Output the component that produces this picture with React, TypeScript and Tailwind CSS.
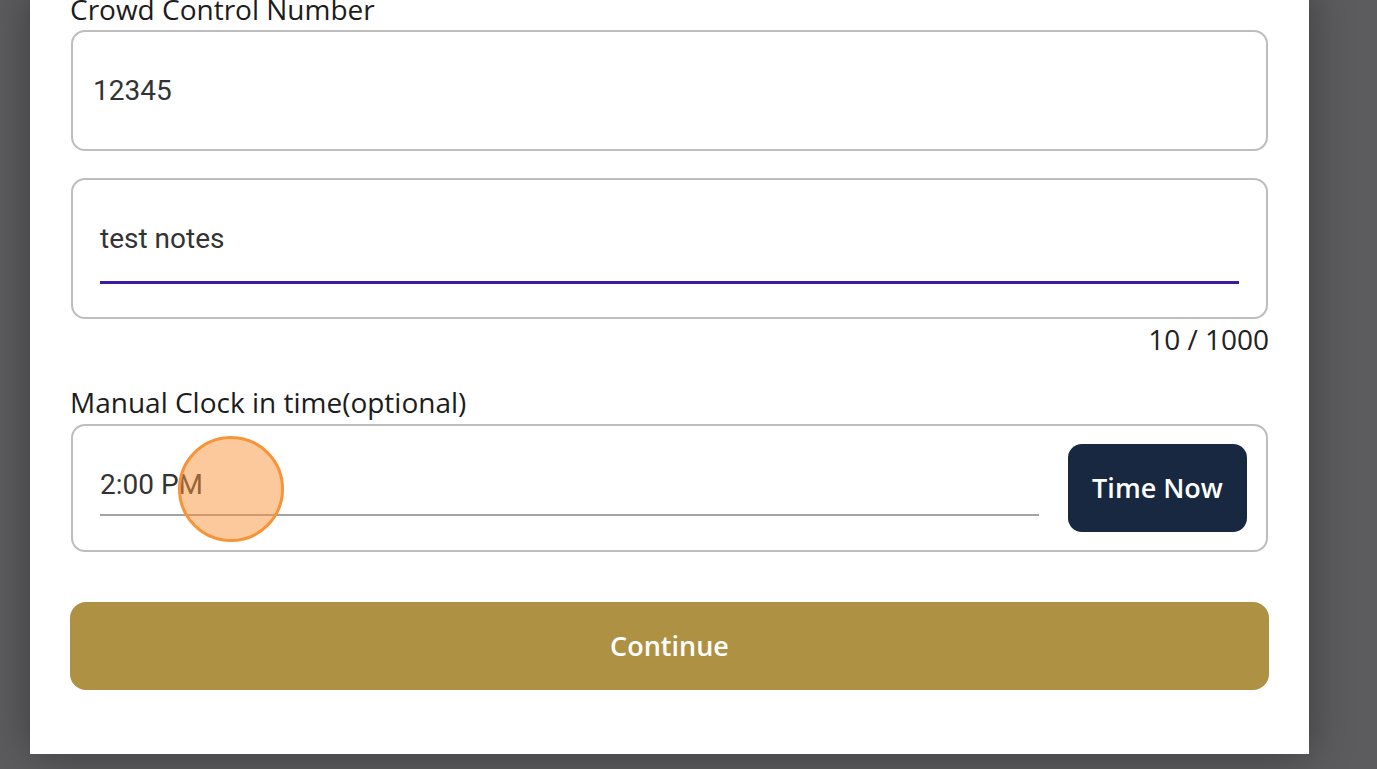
import React from 'react';

const sans = { fontFamily: '"Open Sans", "Noto Sans", sans-serif' };

export default function App() {
  return (
    <div className="min-h-[769px] bg-[#5c5c5e] overflow-hidden">
      <div
        className="ml-[30px] -mt-[10px] w-[1279px] bg-white px-10 pb-[64px] shadow-[0_0_40px_rgba(0,0,0,0.35)]"
        style={sans}
      >
        {/* Crowd control number */}
        <label className="block text-[28px] leading-[38px] text-[#1c1c1c] mb-[2px]">Crowd Control Number</label>
        <div className="mx-px rounded-[14px] border-2 border-[#bdbdbd] px-[20px] pt-[39px] pb-[38px]">
          <div className="font-['Roboto'] text-[28px] leading-[40px] text-[#333]">12345</div>
        </div>

        {/* Notes */}
        <div className="mx-px mt-[27px] rounded-[14px] border-2 border-[#bdbdbd] px-[27px] pt-[39px] pb-[33px]">
          <div className="font-['Roboto'] text-[28px] leading-[40px] text-[#333]">test notes</div>
          <div className="mt-[22px] h-[3px] bg-[#3a1c9c]" />
        </div>
        <div className="mt-px text-right text-[28px] leading-[38px] text-[#222]">10 / 1000</div>

        {/* Manual clock in */}
        <label className="mt-[25px] block text-[28px] leading-[38px] text-[#1c1c1c] mb-[3px]">
          Manual Clock in time(optional)
        </label>
        <div className="relative mx-px flex items-start rounded-[14px] border-2 border-[#bdbdbd] py-[18px] pl-[27px] pr-[19px]">
          <div className="flex-1 pt-[21px]">
            <div className="font-['Roboto'] text-[28px] leading-[40px] text-[#333]">2:00 PM</div>
            <div className="mt-[9px] h-[2px] bg-[#a3a3a3]" />
          </div>
          <button className="ml-[29px] h-[88px] w-[179px] rounded-[14px] bg-[#172840] text-[27px] font-semibold text-white">
            Time Now
          </button>
          {/* touch indicator */}
          <div className="absolute left-[105px] top-[10px] h-[106px] w-[106px] rounded-full border-[3px] border-[#f7943a] bg-[#f7943a]/50" />
        </div>

        <button className="mt-[50px] h-[88px] w-full rounded-[16px] bg-[#ae9143] text-[27px] font-semibold text-white">
          Continue
        </button>
      </div>
    </div>
  );
}
